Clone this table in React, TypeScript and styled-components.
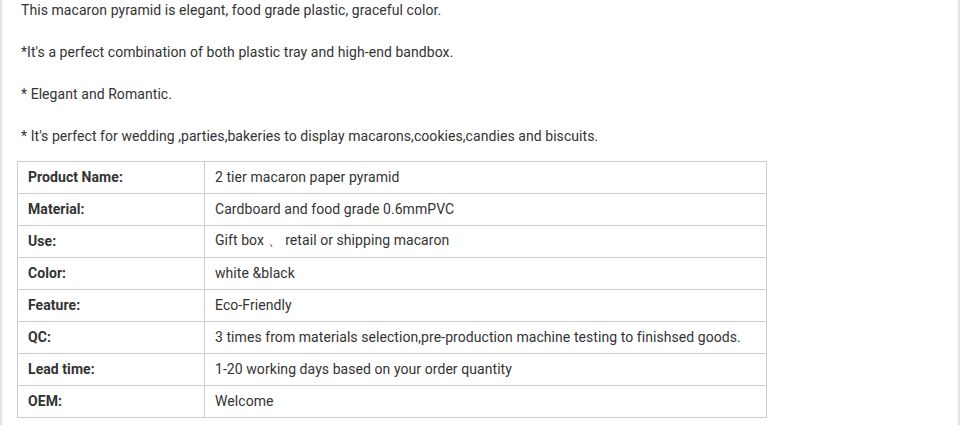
import React from "react";
import styled, { createGlobalStyle } from "styled-components";

const Global = createGlobalStyle`
  html, body { margin: 0; padding: 0; background: #fff; }
  body { font-family: Roboto, "Liberation Sans", Arial, sans-serif; color: #333; }
`;

const Page = styled.div`
  width: 960px;
  height: 425px;
  box-sizing: border-box;
  border-left: 2px solid #e5e5e5;
  border-right: 2px solid #e5e5e5;
  padding: 0 0 0 15px;
  overflow: hidden;
  letter-spacing: 0.065px;
`;

const Para = styled.p`
  margin: 0 0 21px;
  padding-left: 4px;
  font-size: 14px;
  line-height: 21px;
  color: #333;
`;

const Table = styled.table`
  border-collapse: collapse;
  width: 750px;
  margin-top: -7px;
  font-size: 14px;
  color: #333;
`;

const Label = styled.td`
  width: 166px;
  border: 1px solid #ccc;
  padding: 0 10px 1px;
  height: 30px;
  font-weight: bold;
  font-size: 14px;
`;

const Value = styled.td`
  border: 1px solid #ccc;
  padding: 0 10px 1px;
  height: 30px;
`;

const rows: [string, string][] = [
  ["Product Name:", "2 tier macaron paper pyramid"],
  ["Material:", "Cardboard and food grade 0.6mmPVC"],
  ["Use:", "Gift box 、 retail or shipping macaron"],
  ["Color:", "white &black"],
  ["Feature:", "Eco-Friendly"],
  ["QC:", "3 times from materials selection,pre-production machine testing to finishsed goods."],
  ["Lead time:", "1-20 working days based on your order quantity"],
  ["OEM:", "Welcome"],
];

export default function App() {
  return (
    <>
      <Global />
      <Page>
        <Para>This macaron pyramid is elegant, food grade plastic, graceful color.</Para>
        <Para>*It's a perfect combination of both plastic tray and high-end bandbox.</Para>
        <Para>* Elegant and Romantic.</Para>
        <Para>* It's perfect for wedding ,parties,bakeries to display macarons,cookies,candies and biscuits.</Para>
        <Table>
          <tbody>
            {rows.map(([l, v]) => (
              <tr key={l}>
                <Label>{l}</Label>
                <Value>{v}</Value>
              </tr>
            ))}
          </tbody>
        </Table>
      </Page>
    </>
  );
}
